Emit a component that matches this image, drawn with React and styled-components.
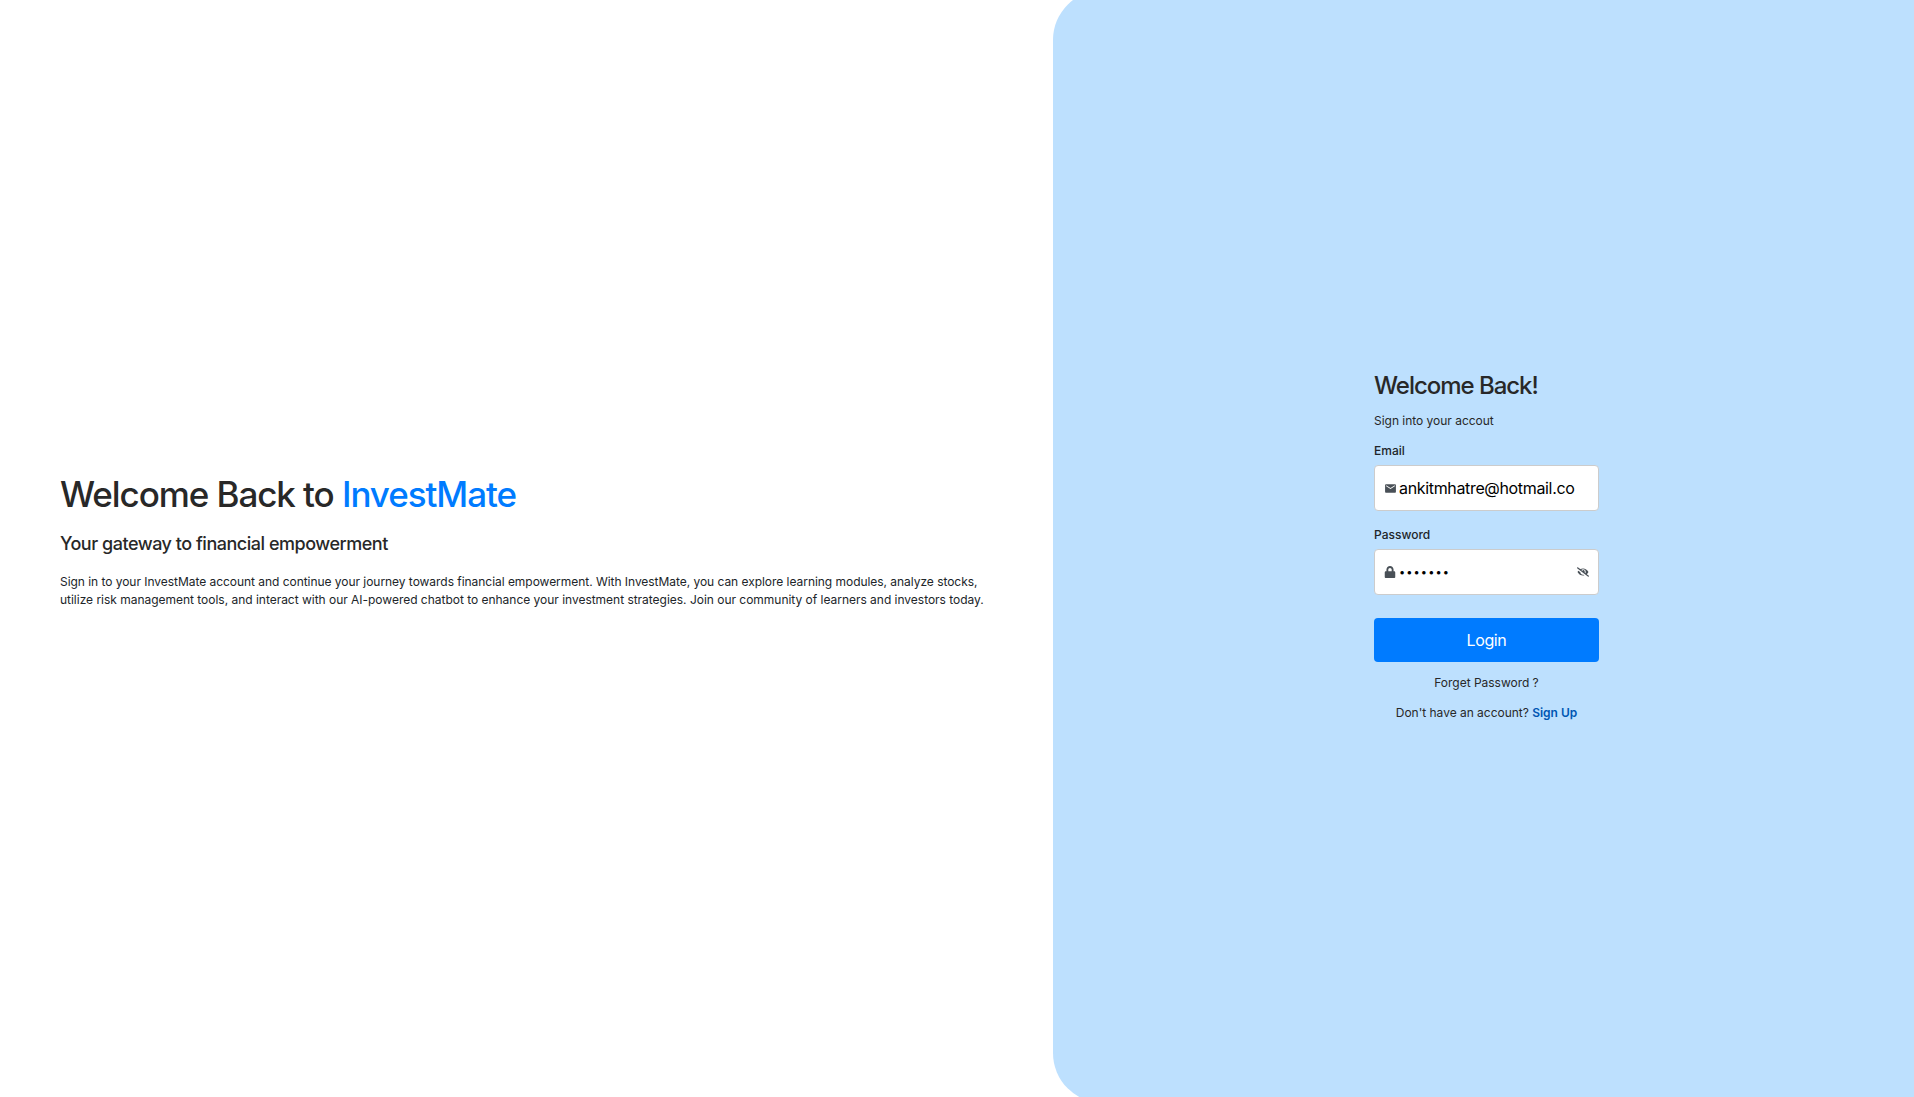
import React, { useState } from "react";
import styled, { createGlobalStyle } from "styled-components";
import { MdEmail } from "react-icons/md";
import { FaLock, FaEyeSlash } from "react-icons/fa";

const GlobalStyle = createGlobalStyle`
  * { box-sizing: border-box; }
  body {
    margin: 0;
    overflow: hidden;
    background: #fff;
    color: #212529;
    font-family: Inter, "Liberation Sans", sans-serif;
    font-size: 12px;
  }
  h1, h2, p { margin: 0; }
`;

const Page = styled.div`
  display: flex;
  height: 100vh;
  overflow: hidden;
`;

const Intro = styled.section`
  width: 1053px;
  flex: none;
  display: flex;
  flex-direction: column;
  justify-content: center;
  padding: 0 60px 15px;
`;

const Title = styled.h1`
  color: #282828;
  font-size: 35px;
  line-height: 43px;
  font-weight: 450;
  letter-spacing: -1.07px;
  white-space: nowrap;
`;

const Brand = styled.span`
  color: #007bff;
`;

const Subtitle = styled.h2`
  margin-top: 17px;
  color: #282828;
  font-size: 18px;
  line-height: 22px;
  font-weight: 450;
  letter-spacing: -0.48px;
`;

const Description = styled.p`
  margin-top: 18px;
  line-height: 18px;
  white-space: nowrap;
  letter-spacing: -0.02px;

  &::first-line {
    letter-spacing: -0.04px;
  }
`;

const Panel = styled.section`
  flex: 1;
  height: 1113px;
  margin-top: -10px;
  border-radius: 50px 0 0 50px;
  background: #bde0fe;
  display: flex;
  justify-content: center;
  padding-top: 381px;
`;

const Form = styled.form`
  width: 225px;
  margin-left: 6px;
  display: flex;
  flex-direction: column;
`;

const Heading = styled.h2`
  color: #282828;
  font-size: 24px;
  line-height: 29px;
  font-weight: 450;
  letter-spacing: -1.03px;
`;

const Text = styled.p`
  margin-top: ${(p) => p.$top}px;
  color: #282828;
  line-height: 18px;
  text-align: ${(p) => p.$align || "left"};
  letter-spacing: -0.02px;
`;

const Label = styled.label`
  margin-top: ${(p) => p.$top}px;
  margin-bottom: 5px;
  line-height: 18px;
  font-weight: 450;
`;

const Field = styled.div`
  display: flex;
  align-items: center;
  height: 46px;
  padding: 0 9px;
  border: 1px solid #ccc;
  border-radius: 4px;
  background: #fff;
  color: #495057;

  svg { flex: none; display: block; }
`;

const Input = styled.input`
  flex: 1;
  min-width: 0;
  margin: 0;
  padding: 0 0 0 2px;
  border: 0;
  outline: 0;
  background: transparent;
  color: #000;
  font-family: inherit;
  font-size: 16px;
  letter-spacing: -0.34px;

  &[type="password"] {
    padding-left: 3px;
    font-size: 11px;
    letter-spacing: 1.1px;
  }
`;

const Button = styled.button`
  height: 44px;
  margin-top: 23px;
  border: 0;
  border-radius: 4px;
  background: #007bff;
  color: #fff;
  font-family: inherit;
  font-size: 16px;
  letter-spacing: -0.4px;
`;

const SignUp = styled.a`
  color: #0056b3;
  font-weight: 600;
`;

export default function App() {
  const [email, setEmail] = useState("ankitmhatre@hotmail.co");
  const [password, setPassword] = useState("1234567");
  return (
    <Page>
      <GlobalStyle />
      <Intro>
        <Title>Welcome Back to <Brand>InvestMate</Brand></Title>
        <Subtitle>Your gateway to financial empowerment</Subtitle>
        <Description>
          Sign in to your InvestMate account and continue your journey towards financial empowerment. With InvestMate, you can explore learning modules, analyze stocks,
          <br />
          utilize risk management tools, and interact with our AI-powered chatbot to enhance your investment strategies. Join our community of learners and investors today.
        </Description>
      </Intro>
      <Panel>
        <Form onSubmit={(e) => e.preventDefault()}>
          <Heading>Welcome Back!</Heading>
          <Text $top={12}>Sign into your accout</Text>
          <Label $top={12} htmlFor="email">Email</Label>
          <Field>
            <MdEmail size={13} />
            <Input id="email" value={email} onChange={(e) => setEmail(e.target.value)} />
          </Field>
          <Label $top={15} htmlFor="password">Password</Label>
          <Field>
            <FaLock size={12} />
            <Input id="password" type="password" value={password} onChange={(e) => setPassword(e.target.value)} />
            <FaEyeSlash size={12} />
          </Field>
          <Button type="submit">Login</Button>
          <Text $top={12} $align="center">Forget Password ?</Text>
          <Text $top={12} $align="center">Don't have an account? <SignUp>Sign Up</SignUp></Text>
        </Form>
      </Panel>
    </Page>
  );
}
